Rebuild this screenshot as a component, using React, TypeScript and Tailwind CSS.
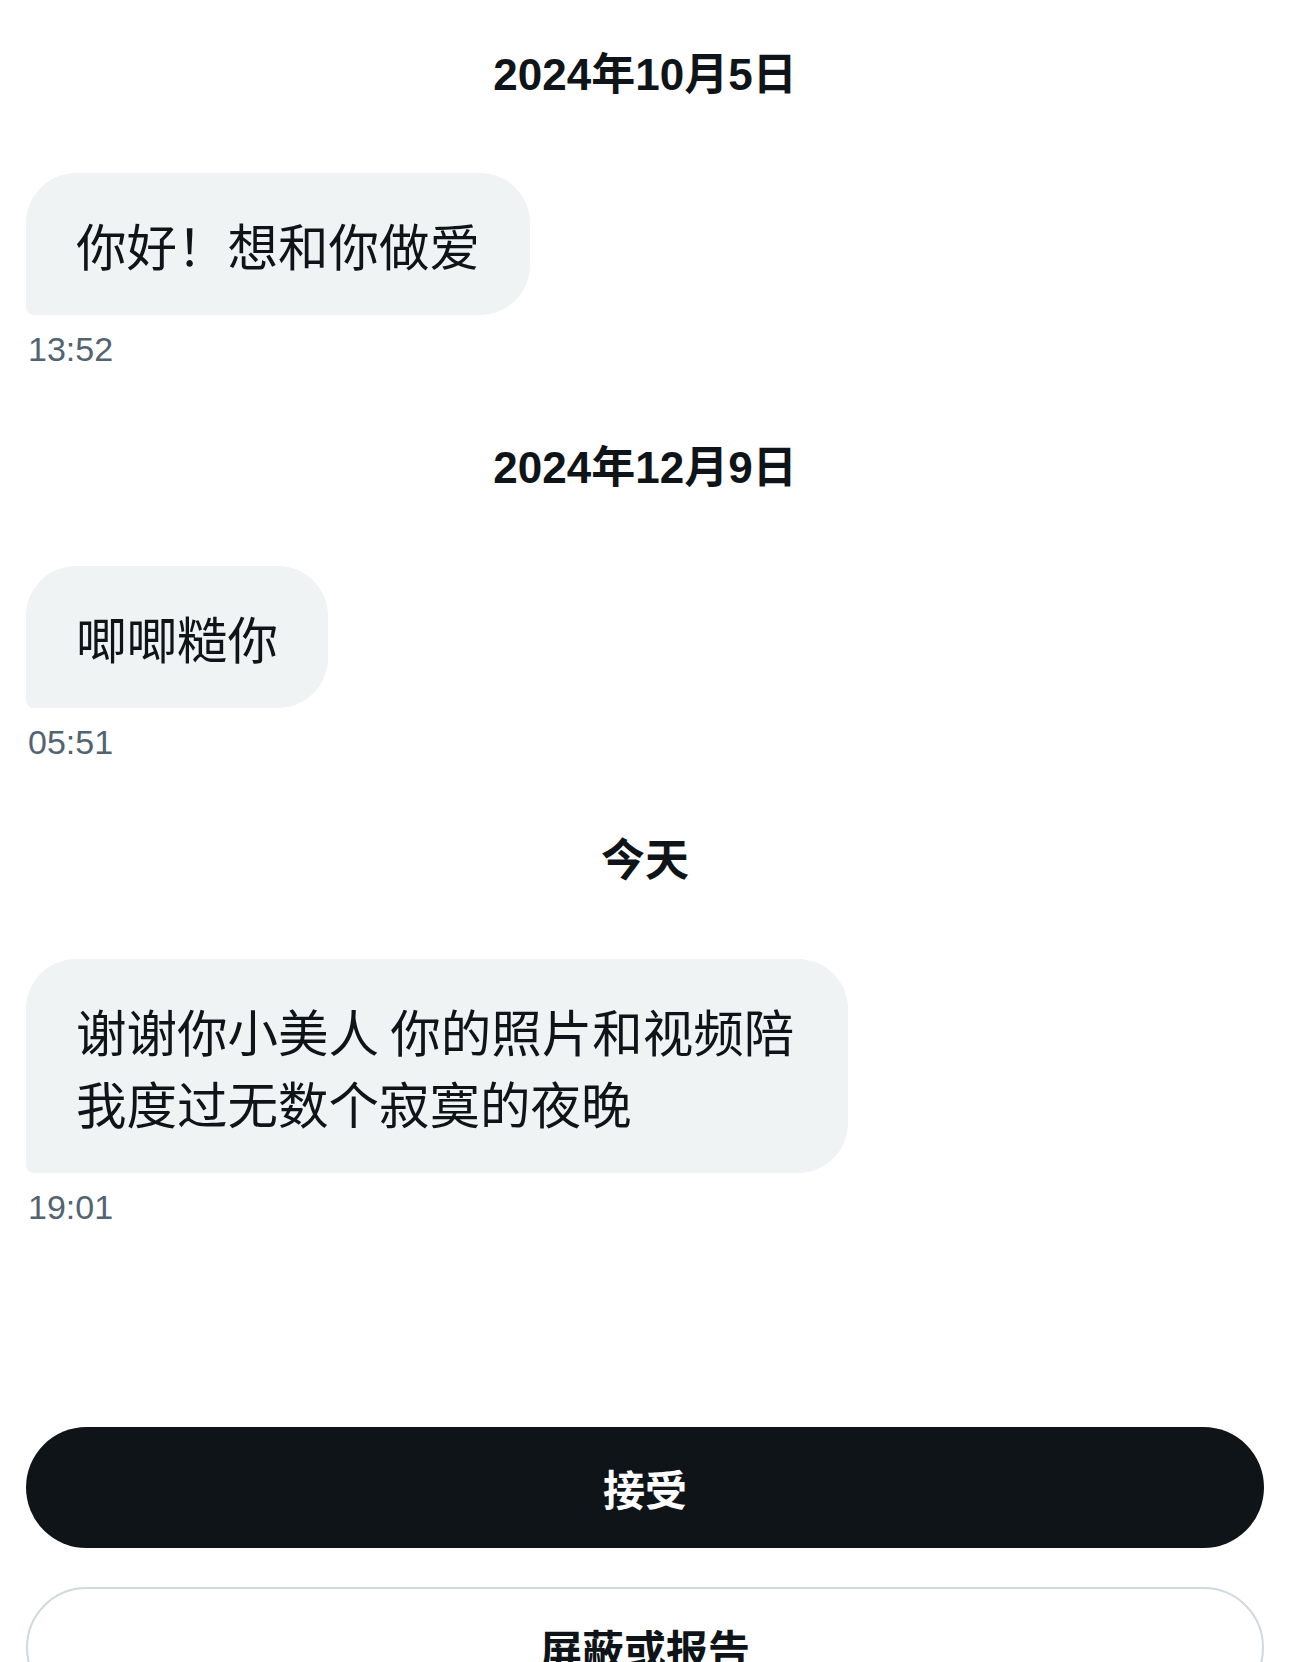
import React from 'react';

type Message = {
  day: string;
  text: string;
  time: string;
};

const messages: Message[] = [
  { day: '2024年10月5日', text: '你好！想和你做爱', time: '13:52' },
  { day: '2024年12月9日', text: '唧唧糙你', time: '05:51' },
  { day: '今天', text: '谢谢你小美人 你的照片和视频陪我度过无数个寂寞的夜晚', time: '19:01' },
];

function DayHeader({ label, first }: { label: string; first?: boolean }) {
  return (
    <div
      className={`${first ? '' : 'mt-[65px]'} h-[60px] flex items-center justify-center text-[44px] font-bold text-[#0f1419] font-['Liberation_Sans','Noto_Sans_CJK_SC',sans-serif]`}
    >
      {label}
    </div>
  );
}

function Bubble({ text, time }: { text: string; time: string }) {
  return (
    <div className="flex flex-col items-start">
      <div className="mt-[68px] max-w-[822px] bg-[#eff3f4] rounded-[50px] rounded-bl-[8px] px-[50px] py-[35px] text-[50.5px] leading-[72px] text-[#0f1419] font-['Noto_Sans_CJK_SC',sans-serif]">
        {text}
      </div>
      <span className="mt-[10px] h-[48px] flex items-center pl-[2px] text-[34px] text-[#536471] font-['Liberation_Sans',sans-serif]">
        {time}
      </span>
    </div>
  );
}

export default function App() {
  return (
    <div className="w-full min-h-screen bg-white px-[26px] pt-[45px] flex flex-col">
      {messages.map((m, i) => (
        <React.Fragment key={m.time}>
          <DayHeader label={m.day} first={i === 0} />
          <Bubble text={m.text} time={m.time} />
        </React.Fragment>
      ))}

      {/* request actions */}
      <div className="mt-[196px] flex flex-col gap-[39px] font-['Noto_Sans_CJK_SC',sans-serif]">
        <button className="h-[121px] w-full rounded-full bg-[#0f1419] text-white text-[42px] font-bold">
          接受
        </button>
        <button className="h-[121px] w-full rounded-full border-2 border-[#cfd9de] bg-white text-[#0f1419] text-[42px] font-bold">
          屏蔽或报告
        </button>
      </div>
    </div>
  );
}
